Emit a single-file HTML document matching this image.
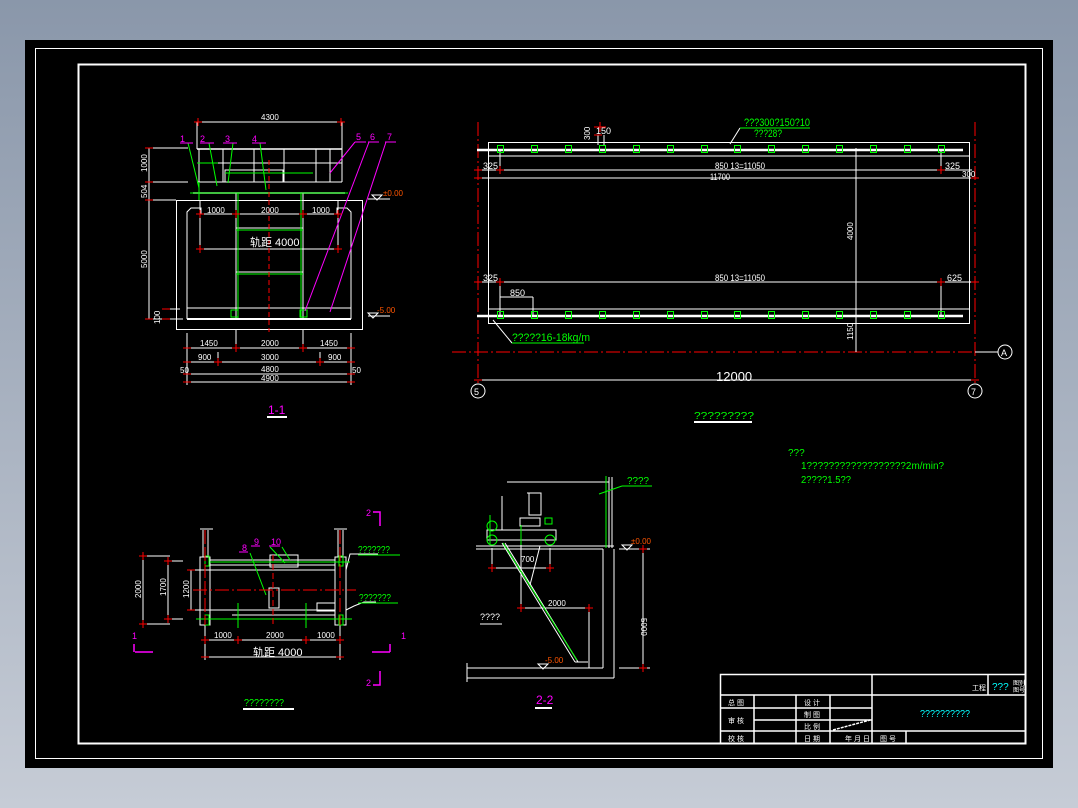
<!DOCTYPE html>
<html><head><meta charset="utf-8"><style>
html,body{margin:0;padding:0;width:1078px;height:808px;overflow:hidden;background:linear-gradient(#8a97aa,#c6ccd6);}
svg{display:block}
text{font-family:"Liberation Sans",sans-serif;}
</style></head><body>
<svg width="1078" height="808" viewBox="0 0 1078 808" xmlns="http://www.w3.org/2000/svg">
<rect x="25" y="40" width="1028" height="728" fill="#000"/>
<rect x="35.5" y="48.5" width="1007" height="710" fill="none" stroke="#fff" stroke-width="1"/>
<rect x="78.5" y="64.5" width="947" height="679" fill="none" stroke="#fff" stroke-width="2"/>

<!-- ========== PLAN VIEW ========== -->
<g fill="none" stroke="#fff" stroke-width="1">
<line x1="478" y1="122" x2="478" y2="385" stroke="#f00" stroke-dasharray="14,3,2,3"/>
<line x1="975" y1="122" x2="975" y2="385" stroke="#f00" stroke-dasharray="14,3,2,3"/>
<line x1="452" y1="352" x2="998" y2="352" stroke="#f00" stroke-dasharray="14,3,2,3"/>
<rect x="488.5" y="142.5" width="481" height="181"/>
<line x1="488" y1="156" x2="970" y2="156"/>
<line x1="488" y1="309" x2="970" y2="309"/>
<line x1="477" y1="150" x2="963" y2="150" stroke-width="2.5"/>
<line x1="477" y1="316" x2="963" y2="316" stroke-width="2.5"/>
<line x1="478" y1="170" x2="972" y2="170"/>
<line x1="478" y1="178" x2="975" y2="178"/>
<line x1="478" y1="282" x2="975" y2="282"/>
<line x1="500" y1="170" x2="500" y2="150"/>
<line x1="941" y1="170" x2="941" y2="150"/>
<line x1="500" y1="282" x2="500" y2="316"/>
<line x1="941" y1="282" x2="941" y2="316"/>
<line x1="500" y1="297" x2="533" y2="297"/>
<line x1="533" y1="297" x2="533" y2="316"/>
<line x1="856" y1="148" x2="856" y2="352"/>
<line x1="478" y1="380" x2="975" y2="380"/>
<line x1="598" y1="135" x2="598" y2="145"/><line x1="604" y1="135" x2="604" y2="145"/>
<circle cx="478" cy="391" r="7"/><circle cx="975" cy="391" r="7"/><circle cx="1005" cy="352" r="7"/>
<line x1="975" y1="352" x2="998" y2="352" stroke="#fff"/>
<line x1="740" y1="128" x2="730" y2="144"/>
<line x1="493" y1="320" x2="512" y2="343"/>
</g>
<g fill="none" stroke="#0f0" stroke-width="1">
<rect x="497.5" y="145.5" width="6" height="7"/><rect x="531.5" y="145.5" width="6" height="7"/><rect x="565.5" y="145.5" width="6" height="7"/><rect x="599.5" y="145.5" width="6" height="7"/><rect x="633.5" y="145.5" width="6" height="7"/><rect x="667.5" y="145.5" width="6" height="7"/><rect x="701.5" y="145.5" width="6" height="7"/><rect x="734.5" y="145.5" width="6" height="7"/><rect x="768.5" y="145.5" width="6" height="7"/><rect x="802.5" y="145.5" width="6" height="7"/><rect x="836.5" y="145.5" width="6" height="7"/><rect x="870.5" y="145.5" width="6" height="7"/><rect x="904.5" y="145.5" width="6" height="7"/><rect x="938.5" y="145.5" width="6" height="7"/>
<rect x="497.5" y="311.5" width="6" height="7"/><rect x="531.5" y="311.5" width="6" height="7"/><rect x="565.5" y="311.5" width="6" height="7"/><rect x="599.5" y="311.5" width="6" height="7"/><rect x="633.5" y="311.5" width="6" height="7"/><rect x="667.5" y="311.5" width="6" height="7"/><rect x="701.5" y="311.5" width="6" height="7"/><rect x="734.5" y="311.5" width="6" height="7"/><rect x="768.5" y="311.5" width="6" height="7"/><rect x="802.5" y="311.5" width="6" height="7"/><rect x="836.5" y="311.5" width="6" height="7"/><rect x="870.5" y="311.5" width="6" height="7"/><rect x="904.5" y="311.5" width="6" height="7"/><rect x="938.5" y="311.5" width="6" height="7"/>
<line x1="740" y1="128" x2="810" y2="128"/>
<line x1="512" y1="343" x2="584" y2="343"/>
</g>
<g stroke="#f00" stroke-width="1">
<path d="M496 170h8M500 166v8M937 170h8M941 166v8M474 170h8M474 178h8M971 178h8M496 282h8M500 278v8M937 282h8M941 278v8M474 282h8M971 282h8M474 380h8M971 380h8M594 127h12M600 122v10M594 135h8"/>
</g>
<g fill="#fff" font-size="9">
<text x="715" y="169" textLength="50" lengthAdjust="spacingAndGlyphs">850 13=11050</text>
<text x="710" y="180" textLength="20" lengthAdjust="spacingAndGlyphs">11700</text>
<text x="715" y="281" textLength="50" lengthAdjust="spacingAndGlyphs">850 13=11050</text>
<text x="483" y="169">325</text><text x="945" y="169">325</text><text x="962" y="177" font-size="8">300</text>
<text x="483" y="281">325</text><text x="947" y="281">625</text>
<text x="510" y="296">850</text><text x="596" y="134">150</text>
<text x="716" y="381" font-size="13">12000</text>
<text x="474" y="395" font-size="9">5</text><text x="971" y="395" font-size="9">7</text><text x="1001" y="356" font-size="9">A</text>
<text transform="translate(853,240) rotate(-90)" font-size="8">4000</text>
<text transform="translate(853,340) rotate(-90)" font-size="8">1150</text>
<text transform="translate(590,140) rotate(-90)" font-size="8">300</text>
</g>
<g fill="#0f0" font-size="11">
<text x="744" y="126" textLength="66" lengthAdjust="spacingAndGlyphs">???300?150?10</text>
<text x="754" y="137" textLength="28" lengthAdjust="spacingAndGlyphs">???28?</text>
<text x="512" y="341" textLength="78" lengthAdjust="spacingAndGlyphs">?????16-18kg/m</text>
<text x="694" y="419" font-size="10" textLength="60" lengthAdjust="spacingAndGlyphs">?????????</text>
<text x="788" y="456" font-size="10">???</text>
<text x="801" y="469" font-size="10" textLength="143" lengthAdjust="spacingAndGlyphs">1??????????????????2m/min?</text>
<text x="801" y="483" font-size="10" textLength="50" lengthAdjust="spacingAndGlyphs">2????1.5??</text>
</g>
<rect x="694" y="421" width="58" height="2" fill="#fff"/>

<!-- ========== SECTION 1-1 ========== -->
<g fill="none" stroke="#fff" stroke-width="1">
<line x1="197" y1="122" x2="342" y2="122"/>
<line x1="197" y1="122" x2="197" y2="149"/><line x1="342" y1="122" x2="342" y2="182"/>
<path d="M176.5 329.5V200.5H362.5V329.5Z"/>
<path d="M187 319V212l4-4h10v6M351 319V212l-4-4h-10v6"/>
<line x1="187" y1="319" x2="351" y2="319" stroke-width="2"/>
<line x1="187" y1="308" x2="351" y2="308"/>
<line x1="197" y1="149" x2="342" y2="149" stroke-width="1.5"/>
<line x1="197" y1="163" x2="342" y2="163"/>
<line x1="197" y1="182" x2="342" y2="182"/>
<line x1="199" y1="149" x2="199" y2="182"/><line x1="223" y1="149" x2="223" y2="182"/><line x1="254" y1="149" x2="254" y2="182"/><line x1="284" y1="149" x2="284" y2="182"/><line x1="316" y1="149" x2="316" y2="182"/><line x1="330" y1="149" x2="330" y2="182"/>
<rect x="225" y="170" width="58" height="12"/>
<line x1="193" y1="193" x2="345" y2="193" stroke-width="1.5"/>
<line x1="236" y1="193" x2="236" y2="318"/><line x1="303" y1="193" x2="303" y2="318"/>
<line x1="236" y1="228" x2="303" y2="228"/><line x1="236" y1="272" x2="303" y2="272"/>
<line x1="200" y1="214" x2="338" y2="214"/>
<line x1="200" y1="249" x2="338" y2="249"/>
<line x1="200" y1="200" x2="200" y2="249"/><line x1="338" y1="200" x2="338" y2="249"/>
<line x1="149" y1="148" x2="149" y2="319"/>
<line x1="149" y1="148" x2="188" y2="148"/><line x1="149" y1="182" x2="188" y2="182"/><line x1="149" y1="200" x2="176" y2="200"/>
<line x1="149" y1="319" x2="183" y2="319"/><line x1="163" y1="309" x2="180" y2="309"/>
<line x1="187" y1="333" x2="187" y2="385"/><line x1="351" y1="333" x2="351" y2="385"/>
<line x1="187" y1="348" x2="352" y2="348"/><line x1="187" y1="362" x2="352" y2="362"/><line x1="187" y1="374" x2="352" y2="374"/><line x1="187" y1="382" x2="352" y2="382"/>
<line x1="236" y1="330" x2="236" y2="348"/><line x1="303" y1="330" x2="303" y2="348"/>
<line x1="218" y1="352" x2="218" y2="362"/><line x1="320" y1="352" x2="320" y2="362"/>
<line x1="368" y1="199" x2="390" y2="199"/><path d="M372 195l5 5 5-5z"/>
<line x1="368" y1="316" x2="390" y2="316"/><path d="M368 313l5 5 5-5z"/>
</g>
<g fill="none" stroke="#0f0" stroke-width="1">
<line x1="238" y1="193" x2="238" y2="318"/><line x1="301" y1="193" x2="301" y2="318"/>
<line x1="236" y1="230" x2="303" y2="230"/><line x1="236" y1="274" x2="303" y2="274"/>
<line x1="190" y1="193" x2="348" y2="193"/>
<line x1="197" y1="163" x2="218" y2="163"/>
<line x1="225" y1="173" x2="313" y2="173"/>
<rect x="231" y="310" width="7" height="7"/><rect x="300" y="310" width="7" height="7"/>
<line x1="188" y1="143" x2="199" y2="188"/><line x1="209" y1="143" x2="217" y2="186"/><line x1="233" y1="143" x2="228" y2="183"/><line x1="260" y1="143" x2="266" y2="190"/>
<line x1="199" y1="182" x2="199" y2="200"/>
</g>
<g stroke="#f0f" stroke-width="1" fill="none">
<line x1="180" y1="143" x2="193" y2="143"/><line x1="200" y1="143" x2="214" y2="143"/><line x1="223" y1="143" x2="237" y2="143"/><line x1="252" y1="143" x2="266" y2="143"/>
<line x1="355" y1="142" x2="366" y2="142"/><line x1="368" y1="142" x2="379" y2="142"/><line x1="385" y1="142" x2="396" y2="142"/>
<line x1="355" y1="142" x2="330" y2="173"/><line x1="369" y1="142" x2="305" y2="311"/><line x1="386" y1="142" x2="330" y2="312"/>
</g>
<g stroke="#f00" stroke-width="1">
<line x1="269" y1="160" x2="269" y2="332" stroke-dasharray="5,3"/>
<path d="M194 122h8M198 118v8M337 122h8M341 118v8M145 148h8M145 182h8M145 200h8M145 319h8M196 214h8M200 210v8M232 214h8M236 210v8M299 214h8M303 210v8M334 214h8M338 210v8M196 249h8M200 245v8M334 249h8M338 245v8M183 348h8M232 348h8M236 344v8M299 348h8M303 344v8M347 348h8M183 362h8M214 362h8M218 358v8M316 362h8M320 358v8M347 362h8M183 374h8M347 374h8M183 382h8M347 382h8M162 309h8M162 319h8"/>
</g>
<g fill="#fff" font-size="8">
<text x="261" y="120">4300</text>
<text x="207" y="213">1000</text><text x="261" y="213">2000</text><text x="312" y="213">1000</text>
<text x="250" y="246" font-size="11">轨距 4000</text>
<text x="200" y="346">1450</text><text x="261" y="346">2000</text><text x="320" y="346">1450</text>
<text x="198" y="360">900</text><text x="261" y="360">3000</text><text x="328" y="360">900</text>
<text x="261" y="372">4800</text><text x="261" y="381">4900</text>
<text x="180" y="373">50</text><text x="352" y="373">50</text>
<text transform="translate(147,172) rotate(-90)">1000</text>
<text transform="translate(147,198) rotate(-90)">504</text>
<text transform="translate(147,268) rotate(-90)">5000</text>
<text transform="translate(160,324) rotate(-90)">100</text>
</g>
<g fill="#f0f" font-size="9">
<text x="180" y="142">1</text><text x="200" y="142">2</text><text x="225" y="142">3</text><text x="252" y="142">4</text>
<text x="356" y="140">5</text><text x="370" y="140">6</text><text x="387" y="140">7</text>
<text x="268" y="414" font-size="12">1-1</text>
</g>
<rect x="267" y="416" width="20" height="2" fill="#fff"/>
<g fill="#f50" font-size="8"><text x="383" y="196">±0.00</text><text x="377" y="313">-5.00</text></g>

<!-- ========== BOTTOM LEFT PLAN ========== -->
<g fill="none" stroke="#fff" stroke-width="1">
<rect x="200" y="557" width="10" height="68"/><rect x="335" y="557" width="11" height="68"/>
<line x1="203" y1="530" x2="203" y2="557"/><line x1="208" y1="530" x2="208" y2="557"/><line x1="200" y1="529" x2="213" y2="529"/>
<line x1="338" y1="530" x2="338" y2="557"/><line x1="343" y1="530" x2="343" y2="557"/><line x1="334" y1="529" x2="347" y2="529"/>
<line x1="210" y1="560" x2="335" y2="560"/><line x1="210" y1="565" x2="335" y2="565"/>
<line x1="191" y1="570" x2="335" y2="570"/>
<line x1="191" y1="610" x2="335" y2="610"/>
<rect x="270" y="555" width="28" height="12"/>
<rect x="269" y="588" width="10" height="20"/>
<rect x="317" y="603" width="18" height="8"/>
<line x1="232" y1="615" x2="335" y2="615"/><line x1="232" y1="619" x2="335" y2="619"/>
<line x1="143" y1="556" x2="170" y2="556"/><line x1="143" y1="624" x2="170" y2="624"/>
<line x1="143" y1="556" x2="143" y2="624"/>
<line x1="168" y1="561" x2="183" y2="561"/><line x1="168" y1="619" x2="183" y2="619"/><line x1="168" y1="561" x2="168" y2="619"/>
<line x1="191" y1="570" x2="191" y2="610"/>
<line x1="205" y1="625" x2="205" y2="660"/><line x1="340" y1="625" x2="340" y2="660"/>
<line x1="205" y1="640" x2="340" y2="640"/><line x1="205" y1="657" x2="340" y2="657"/>
<path d="M346 570l4-16h28M346 610l8-4 10-4h12"/>
</g>
<g fill="none" stroke="#0f0" stroke-width="1">
<line x1="210" y1="562" x2="350" y2="562"/><line x1="196" y1="619" x2="352" y2="619"/>
<line x1="238" y1="603" x2="238" y2="628"/><line x1="306" y1="603" x2="306" y2="628"/>
<line x1="250" y1="553" x2="266" y2="595"/><line x1="270" y1="547" x2="285" y2="563"/><line x1="282" y1="547" x2="290" y2="560"/>
<line x1="358" y1="555" x2="400" y2="555"/><line x1="358" y1="603" x2="398" y2="603"/>
<rect x="205" y="556" width="4" height="10"/><rect x="339" y="556" width="4" height="10"/><rect x="205" y="615" width="4" height="10"/><rect x="339" y="615" width="4" height="10"/>
</g>
<g stroke="#f00" stroke-width="1">
<line x1="193" y1="590" x2="356" y2="590" stroke-dasharray="14,3,2,3"/>
<line x1="205" y1="530" x2="205" y2="625" stroke-dasharray="14,3"/><line x1="340" y1="530" x2="340" y2="625" stroke-dasharray="14,3"/>
<line x1="273" y1="555" x2="273" y2="625" stroke-dasharray="6,3"/>
<path d="M139 556h8M143 552v8M139 624h8M143 620v8M164 561h8M168 557v8M164 619h8M168 615v8M187 570h8M187 610h8M201 640h8M205 636v8M234 640h8M238 636v8M302 640h8M306 636v8M336 640h8M340 636v8M201 657h8M336 657h8"/>
</g>
<g fill="#fff" font-size="8">
<text x="214" y="638">1000</text><text x="266" y="638">2000</text><text x="317" y="638">1000</text>
<text x="253" y="656" font-size="11">轨距 4000</text>
<text transform="translate(141,598) rotate(-90)">2000</text>
<text transform="translate(166,596) rotate(-90)">1700</text>
<text transform="translate(189,598) rotate(-90)">1200</text>
</g>
<g fill="#0f0" font-size="10">
<text x="358" y="553" textLength="32" lengthAdjust="spacingAndGlyphs">???????</text>
<text x="359" y="601" textLength="32" lengthAdjust="spacingAndGlyphs">???????</text>
<text x="244" y="706" textLength="40" lengthAdjust="spacingAndGlyphs">????????</text>
</g>
<rect x="243" y="708" width="51" height="2" fill="#fff"/>
<g fill="none" stroke="#f0f" stroke-width="1.5">
<path d="M373 512h7v14M135 652h18M134 644v8M390 652h-18M390 644v8M373 685h7v-14"/>
<line x1="239" y1="552" x2="248" y2="552" stroke-width="1"/><line x1="251" y1="546" x2="260" y2="546" stroke-width="1"/><line x1="269" y1="546" x2="280" y2="546" stroke-width="1"/>
</g>
<g fill="#f0f" font-size="9">
<text x="366" y="516">2</text><text x="132" y="639">1</text><text x="401" y="639">1</text><text x="366" y="686">2</text>
<text x="242" y="551">8</text><text x="254" y="545">9</text><text x="271" y="545">10</text>
</g>

<!-- ========== SECTION 2-2 ========== -->
<g fill="none" stroke="#fff" stroke-width="1">
<line x1="507" y1="482" x2="609" y2="482"/>
<line x1="609" y1="477" x2="609" y2="548"/><line x1="612" y1="477" x2="612" y2="548"/>
<line x1="476" y1="546" x2="614" y2="546"/><line x1="476" y1="549" x2="603" y2="549"/>
<line x1="603" y1="549" x2="603" y2="668"/><line x1="614" y1="549" x2="614" y2="678"/>
<line x1="467" y1="668" x2="603" y2="668"/><line x1="467" y1="678" x2="614" y2="678"/>
<line x1="467" y1="663" x2="467" y2="682"/>
<rect x="487" y="530" width="69" height="10"/>
<rect x="529" y="493" width="12" height="22"/><line x1="527" y1="493" x2="541" y2="493"/>
<line x1="502" y1="496" x2="502" y2="530"/>
<rect x="520" y="518" width="20" height="8"/>
<line x1="502" y1="543" x2="575" y2="662"/><line x1="505" y1="543" x2="578" y2="662"/>
<line x1="575" y1="662" x2="588" y2="662"/>
<line x1="492" y1="548" x2="492" y2="568"/><line x1="550" y1="548" x2="550" y2="568"/>
<line x1="492" y1="568" x2="550" y2="568"/>
<line x1="521" y1="525" x2="521" y2="608"/><line x1="589" y1="608" x2="589" y2="668"/>
<line x1="521" y1="608" x2="589" y2="608"/>
<line x1="540" y1="546" x2="530" y2="585"/>
<line x1="619" y1="549" x2="650" y2="549"/><line x1="619" y1="668" x2="650" y2="668"/>
<line x1="643" y1="549" x2="643" y2="668"/>
<line x1="480" y1="624" x2="502" y2="624"/>
<path d="M622 545l5 5 5-5zM538 664l5 5 5-5z"/>
</g>
<g fill="none" stroke="#0f0" stroke-width="1">
<circle cx="492" cy="526" r="5"/><circle cx="492" cy="540" r="5"/><circle cx="550" cy="540" r="5"/>
<line x1="503" y1="543" x2="577" y2="660"/>
<line x1="521" y1="525" x2="521" y2="545"/><line x1="490" y1="515" x2="490" y2="545"/>
<line x1="606" y1="476" x2="606" y2="548"/>
<line x1="599" y1="494" x2="622" y2="486"/><line x1="622" y1="486" x2="652" y2="486"/>
<rect x="545" y="518" width="7" height="6"/>
</g>
<g stroke="#f00" stroke-width="1">
<path d="M488 568h8M492 564v8M546 568h8M550 564v8M517 608h8M521 604v8M585 608h8M589 604v8M639 549h8M643 545v8M639 668h8M643 664v8"/>
</g>
<g fill="#fff" font-size="8">
<text x="521" y="562">700</text><text x="548" y="606">2000</text>
<text transform="translate(641,618) rotate(90)">5000</text>
</g>
<g fill="#f50" font-size="8"><text x="631" y="544">±0.00</text><text x="545" y="663">-5.00</text></g>
<g fill="#0f0" font-size="10">
<text x="627" y="484" textLength="22" lengthAdjust="spacingAndGlyphs">????</text>
</g>
<text x="480" y="620" fill="#fff" font-size="9">????</text>
<text x="536" y="704" fill="#f0f" font-size="12">2-2</text>
<rect x="535" y="707" width="17" height="2" fill="#fff"/>

<!-- ========== TITLE BLOCK ========== -->
<g fill="none" stroke="#fff" stroke-width="1.5">
<rect x="720.5" y="674.5" width="305" height="69"/>
<line x1="720" y1="695" x2="1026" y2="695"/>
<line x1="720" y1="731" x2="1026" y2="731"/>
<line x1="720" y1="708" x2="872" y2="708"/>
<line x1="754" y1="720" x2="872" y2="720"/>
<line x1="754" y1="695" x2="754" y2="744"/>
<line x1="796" y1="695" x2="796" y2="744"/>
<line x1="830" y1="695" x2="830" y2="744"/>
<line x1="872" y1="675" x2="872" y2="744"/>
<line x1="906" y1="731" x2="906" y2="744"/>
<line x1="988" y1="675" x2="988" y2="695"/>
<line x1="833" y1="730" x2="870" y2="720" stroke-dasharray="3,1"/>
</g>
<g fill="#fff" font-size="7">
<text x="728" y="705">总 图</text><text x="728" y="723">审 核</text><text x="728" y="741">校 核</text>
<text x="804" y="705">设 计</text><text x="804" y="717">制 图</text><text x="804" y="729">比 例</text><text x="804" y="741">日 期</text>
<text x="845" y="741">年 月 日</text><text x="880" y="741">图 号</text>
<text x="972" y="690">工程</text><text x="1013" y="685" font-size="6">图别</text><text x="1013" y="692" font-size="6">图号</text>
</g>
<g fill="#0ff" font-size="10">
<text x="992" y="690">???</text>
<text x="920" y="717" textLength="50" lengthAdjust="spacingAndGlyphs">??????????</text>
</g>
</svg>
</body></html>
